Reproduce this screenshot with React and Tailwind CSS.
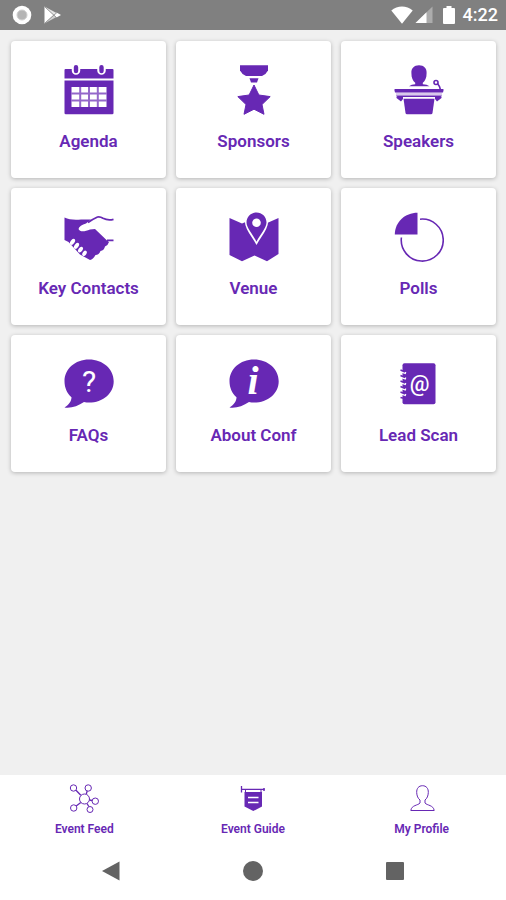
function AgendaIcon() {
  return (
    <svg viewBox="0 0 50 50" className="size-[50px]" fill="currentColor" aria-hidden="true">
      <path d="M1.500 4H48.500Q49.500 4 49.500 5V13.500H.5V5Q.5 4 1.500 4Z" />
      <path d="M.5 15.500H49.500V48Q49.500 49.300 48.200 49.300H1.800Q.5 49.300 .5 48Z" />
      <path d="M12 3V5.500M37.500 3V5.500" stroke="white" strokeWidth="8.500" strokeLinecap="round" />
      <path d="M12 2.200V6M37.500 2.200V6" stroke="currentColor" strokeWidth="4.400" strokeLinecap="round" />
      <path d="M7.500 22H42.500V42H7.500Z" fill="white" />
      <path d="M7.500 28.500H42.500M7.500 35.500H42.500M16.200 22V42M25 22V42M33.800 22V42" stroke="currentColor" strokeWidth="2" opacity=".7" />
    </svg>
  );
}

function SponsorsIcon() {
  return (
    <svg viewBox="0 0 50 50" className="size-[50px]" fill="currentColor" aria-hidden="true">
      <path d="M11 .3H39V5.500Q37 9.500 33 11H17Q13 9.500 11 5.500Z" />
      <path d="M20.500 13.200H29.500L28 17.500H22Z" />
      <path d="M25 20 29.900 30 41.200 31.600 33 39.500 35 49.300 25 44.200 15 49.300 17 39.500 8.800 31.600 20.100 30Z" stroke="currentColor" strokeWidth="1" strokeLinejoin="round" />
    </svg>
  );
}

function SpeakersIcon() {
  return (
    <svg viewBox="0 0 50 50" className="size-[50px]" fill="currentColor" aria-hidden="true">
      <path d="M25 .3C30 .3 32.800 3.500 32.600 8C32.700 13 31 16 28.800 17.800V19.300Q33 19.500 35.500 21.300H15Q17.500 19.500 21.200 19.300V17.800C19 16 17.300 13 17.400 8C17.200 3.500 20 .3 25 .3Z" />
      <circle cx="42" cy="17.500" r="2" fill="none" stroke="currentColor" strokeWidth="1.600" />
      <path d="M43.500 18.500 45.500 21.500 46.500 25" fill="none" stroke="currentColor" strokeWidth="1.600" />
      <path d="M1 24H49Q50 24 49.500 25.500L49 27.500H1L.5 25.500Q0 24 1 24Z" />
      <path d="M2 27.500H48V30.500H2Z" opacity=".25" />
      <path d="M2 30.500H48L46.500 32H3.500Z" />
      <path d="M2.500 31.500H9V34L7 36.500 2.500 33ZM41 31.500H47.500V33L43 36.500 41 34Z" />
      <path d="M9.500 33.800H40.500L38.500 48Q38.300 49.300 37 49.300H13Q11.700 49.300 11.500 48Z" />
    </svg>
  );
}

function ContactsIcon() {
  return (
    <svg viewBox="0 0 50 50" className="size-[50px]" fill="currentColor" aria-hidden="true">
      <path d="M.5 5.500C5 7.800 11 8 17 7.500H27L22 11.500C18 12.500 15 14.500 14.500 17C16 20.500 21 19.500 26 17.500L31 17L43 28.500L45 30Q44 33.500 41 34.500Q40 38.500 36.500 39Q35 43 31.500 43Q29 47.500 26 48L16 42.500L4.500 30L.5 28Z" />
      <path d="M24 10.500Q29 7 33.500 5Q36 4.300 39 6.300Q44 8.800 49.500 7.300M43 28.300Q45.500 28.300 49.500 28.300" fill="none" stroke="currentColor" strokeWidth="1.800" />
      <g fill="white">
        <ellipse cx="8.500" cy="29.800" rx="2" ry="3.400" transform="rotate(35 8.500 29.800)" />
        <ellipse cx="12.500" cy="33.800" rx="2" ry="3.400" transform="rotate(35 12.500 33.800)" />
        <ellipse cx="16.500" cy="37.600" rx="2" ry="3.200" transform="rotate(35 16.500 37.600)" />
        <ellipse cx="20.500" cy="41.300" rx="1.900" ry="2.900" transform="rotate(35 20.500 41.300)" />
      </g>
    </svg>
  );
}

function VenueIcon() {
  return (
    <svg viewBox="0 0 50 50" className="size-[50px]" fill="currentColor" aria-hidden="true">
      <path d="M.5 6 13 11.500 25 6.500 37 11.500 49.500 6V42L38 49.200 25.500 43.500 13 49.200 .5 43Z" />
      <path d="M27.500 0C33.500 0 38 4.500 38 10.500C38 17 31 24.500 27.500 31C24 24.500 17 17 17 10.500C17 4.500 21.500 0 27.500 0Z" fill="white" stroke="white" strokeWidth="2" />
      <path d="M27.500 .5C33 .5 37.500 4.800 37.500 10.500C37.500 16 31 22.500 27.500 29.800C24 22.500 17.500 16 17.500 10.500C17.500 4.800 22 .5 27.500 .5Z" />
      <circle cx="27.500" cy="10.700" r="4.300" fill="white" />
    </svg>
  );
}

function PollsIcon() {
  return (
    <svg viewBox="0 0 50 50" className="size-[50px]" fill="currentColor" aria-hidden="true">
      <path d="M23.500 .7V22.500H.8C.8 10 11 .7 23.500 .7Z" />
      <path d="M26 7.200A21 21 0 1 1 7.400 25.500" fill="none" stroke="currentColor" strokeWidth="1.600" />
    </svg>
  );
}

function Bubble() {
  return (
    <path d="M25 .5C39 .5 49.700 10 49.700 22.200S39 43.500 25 43.500Q22.500 43.500 20 43C14 47 7 49.500 .5 48.500C4.500 46 7.500 42.500 7.500 38.300C3 34.500 .5 28.500 .5 22.200C.5 10 11 .5 25 .5Z" />
  );
}

function FaqIcon() {
  return (
    <svg viewBox="0 0 50 50" className="size-[50px]" fill="currentColor" aria-hidden="true">
      <Bubble />
      <text x="25" y="33" textAnchor="middle" fill="white" className="font-['Roboto',sans-serif] text-[30px]">?</text>
    </svg>
  );
}

function AboutIcon() {
  return (
    <svg viewBox="0 0 50 50" className="size-[50px]" fill="currentColor" aria-hidden="true">
      <Bubble />
      <text x="24" y="35" textAnchor="middle" fill="white" className="font-['Liberation_Serif',serif] text-[40px] font-bold italic">i</text>
    </svg>
  );
}

function LeadIcon() {
  return (
    <svg viewBox="0 0 50 50" className="size-[50px]" fill="currentColor" aria-hidden="true">
      <rect x="8.500" y="4.300" width="33" height="41" rx="2" />
      <path d="M7 12.500 12 14.300M7 18 12 19.800M7 23.500 12 25.300M7 29 12 30.800M7 34.500 12 36.300" stroke="white" strokeWidth="2" />
      <path d="M6.500 11 11 13M6.500 16.500 11 18.500M6.500 22 11 24M6.500 27.500 11 29.500M6.500 33 11 35M6.500 38.500 11 39.500" stroke="currentColor" strokeWidth="1.400" />
      <text x="25.500" y="31.500" textAnchor="middle" fill="white" className="font-['Roboto',sans-serif] text-[22px] font-medium">@</text>
    </svg>
  );
}

function FeedIcon() {
  return (
    <svg viewBox="0 0 30 30" className="size-[30px]" fill="none" stroke="currentColor" aria-hidden="true">
      <circle cx="15.500" cy="16" r="5" />
      <circle cx="4.500" cy="5" r="3.200" />
      <circle cx="19.200" cy="5" r="3.200" />
      <circle cx="26.300" cy="18.200" r="3.200" />
      <circle cx="21" cy="26.500" r="3" />
      <circle cx="4.700" cy="25" r="3.200" />
      <path d="M7 7.300 11.800 12.300M18.200 8 17.300 11M20.500 17 23 17.500M18 20.500 19.800 23.500M11.800 19.500 7.200 23" strokeWidth="1.300" />
    </svg>
  );
}

function GuideIcon() {
  return (
    <svg viewBox="0 0 30 30" className="size-[30px]" fill="currentColor" aria-hidden="true">
      <path d="M3.500 3V9.500M3.500 6.300H26.500" stroke="currentColor" strokeWidth="1.300" />
      <path d="M26 5V8" stroke="currentColor" strokeWidth="1.500" />
      <path d="M6.500 9H24V23.500L15.300 28 6.500 23.500Z" />
      <path d="M7.500 6.500V10M23 6.500V10" stroke="currentColor" />
      <path d="M10 14.500H20.500M10 19.500H20.500" stroke="white" strokeWidth="1.400" />
    </svg>
  );
}

function ProfileIcon() {
  return (
    <svg viewBox="0 0 30 30" className="size-[30px]" fill="none" stroke="currentColor" aria-hidden="true">
      <path d="M15.500 2.700C19.300 2.700 21.500 5.500 21.300 9.500C21.200 12.800 20 15.500 18 17V20C20 22.500 26.500 22 27.200 27.500H3.800C4.500 22 11 22.500 13 20V17C11 15.500 9.800 12.800 9.700 9.500C9.500 5.500 11.700 2.700 15.500 2.700Z" />
    </svg>
  );
}

const tiles = [
  { label: "Agenda", Icon: AgendaIcon },
  { label: "Sponsors", Icon: SponsorsIcon },
  { label: "Speakers", Icon: SpeakersIcon },
  { label: "Key Contacts", Icon: ContactsIcon },
  { label: "Venue", Icon: VenueIcon },
  { label: "Polls", Icon: PollsIcon },
  { label: "FAQs", Icon: FaqIcon },
  { label: "About Conf", Icon: AboutIcon },
  { label: "Lead Scan", Icon: LeadIcon },
];

const tabs = [
  { label: "Event Feed", Icon: FeedIcon },
  { label: "Event Guide", Icon: GuideIcon },
  { label: "My Profile", Icon: ProfileIcon },
];

function StatusBar() {
  return (
    <header className="flex h-[30px] items-center justify-between bg-[#808080] pr-2 pl-3 text-white">
      <div className="flex items-center gap-3">
        <svg viewBox="0 0 20 20" className="size-5" aria-hidden="true">
          <circle cx="10" cy="10" r="9.300" fill="white" />
          <circle cx="10" cy="10" r="5" fill="#b5b5b5" stroke="#cfcfcf" />
        </svg>
        <svg viewBox="0 0 18 18" className="size-[18px]" aria-hidden="true">
          <path d="M.5 .5V17.500L9.500 9Z" fill="white" />
          <path d="M.5 .5 12.500 7 9.500 9Z" fill="#e4e4e4" />
          <path d="M.5 17.500 12.500 11 9.500 9Z" fill="#d0d0d0" />
          <path d="M12.500 6.500 17 9 12.500 11.500 10 9Z" fill="white" />
          <path d="M1 1 13 12M1 17 13 6.500" stroke="#8d8d8d" strokeWidth=".8" />
        </svg>
      </div>
      <div className="flex items-center">
        <svg viewBox="0 0 22 18" className="h-[18px] w-[22px]" fill="white" aria-hidden="true">
          <path d="M11 17.700.3 4.500C6.500-.8 15.500-.8 21.700 4.500Z" />
        </svg>
        <svg viewBox="0 0 18 18" className="ml-0.5 size-[18px]" fill="white" aria-hidden="true">
          <path d="M17.500.5V17H.5Z" opacity=".35" />
          <path d="M11.500 6.300V17H.5Z" />
        </svg>
        <svg viewBox="0 0 12 18" className="mr-2 ml-[10px] h-[18px] w-3" fill="white" aria-hidden="true">
          <path d="M3.500 0H8.500V2H11Q12 2 12 3V17Q12 18 11 18H1Q0 18 0 17V3Q0 2 1 2H3.500Z" />
        </svg>
        <time className="text-[18px] leading-5 font-medium">4:22</time>
      </div>
    </header>
  );
}

function SystemNav() {
  return (
    <div className="flex h-[58px] items-center justify-center text-[#636363]">
      <button type="button" aria-label="Back" className="flex w-[142px] justify-center">
        <svg viewBox="0 0 20 20" className="size-5" fill="currentColor" aria-hidden="true">
          <path d="M18.500.5V19.500L1 10Z" />
        </svg>
      </button>
      <button type="button" aria-label="Home" className="flex w-[142px] justify-center">
        <span className="size-5 rounded-full bg-current" />
      </button>
      <button type="button" aria-label="Recent apps" className="flex w-[142px] justify-center">
        <span className="size-[18px] rounded-[1px] bg-current" />
      </button>
    </div>
  );
}

export default function App() {
  return (
    <div className="flex min-h-screen flex-col bg-[#f0f0f0] font-['Roboto',sans-serif] text-[#6728b4]">
      <StatusBar />
      <main className="grid flex-1 grid-cols-3 content-start gap-[10px] pt-[11px] pr-[10px] pl-[11px]">
        {tiles.map(({ label, Icon }) => (
          <button
            key={label}
            type="button"
            className="flex h-[137px] flex-col items-center gap-4 rounded-[4px] bg-white pt-6 shadow-[0_1px_4px_rgba(0,0,0,0.25)]"
          >
            <Icon />
            <span className="text-[17px] leading-5 font-semibold">{label}</span>
          </button>
        ))}
      </main>
      <footer className="bg-white">
        <nav className="grid grid-cols-3 pt-2">
          {tabs.map(({ label, Icon }) => (
            <a key={label} href="#" className="flex flex-col items-center gap-2 pb-[5px] text-[12px] leading-4 font-semibold">
              <Icon />
              {label}
            </a>
          ))}
        </nav>
        <SystemNav />
      </footer>
    </div>
  );
}
